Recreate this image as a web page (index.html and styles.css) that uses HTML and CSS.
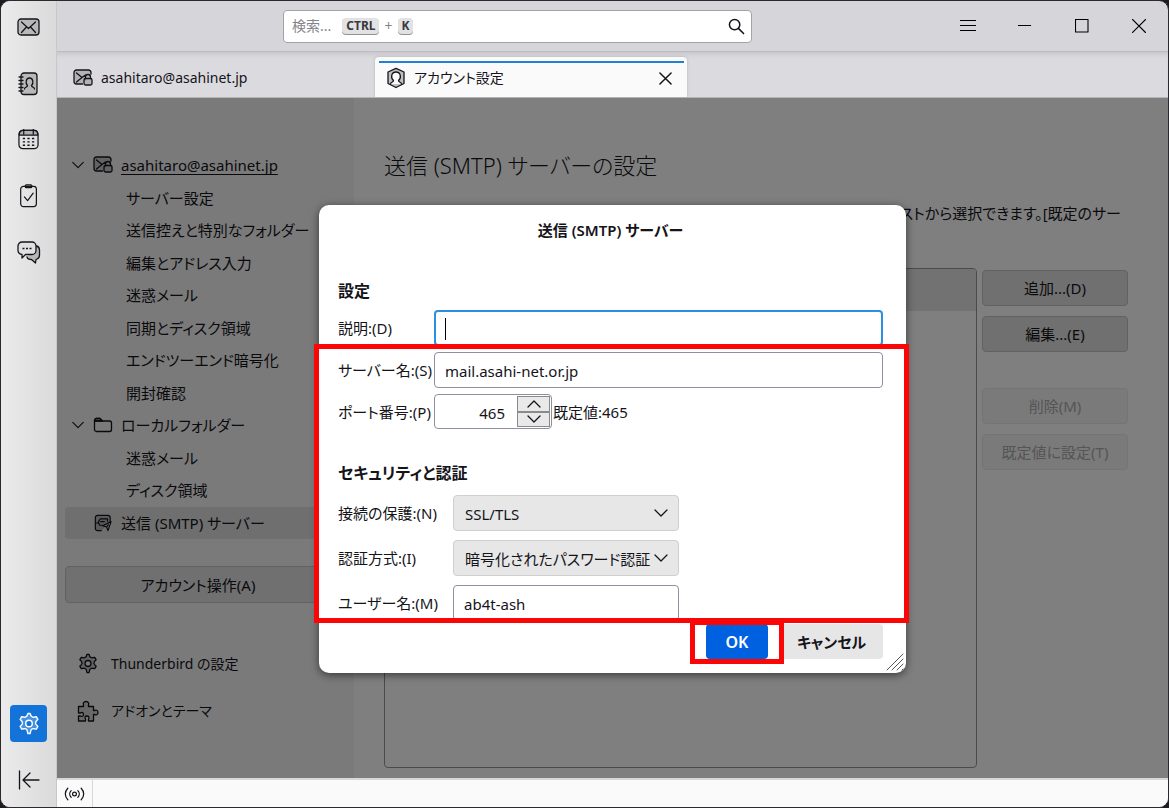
FILE: index.html
```html
<!DOCTYPE html>
<html lang="ja">
<head>
<meta charset="utf-8">
<title>アカウント設定</title>
<link rel="stylesheet" href="styles.css">
</head>
<body>
<svg class="defs" aria-hidden="true">
  <symbol id="i-server" viewBox="0 0 20 18"><path fill="currentColor" fill-opacity=".2" d="M9.500 15H3.500A2.500 2.500 0 0 1 1 12.500v-9A2.500 2.500 0 0 1 3.500 1h12A2.500 2.500 0 0 1 18 3.500V5M3.500 4l5.500 4.500L3.500 13M9 8.500 12.500 6M12.500 9.500V8a2.500 2.500 0 0 1 5 0v1.500"/><rect x="11" y="9.500" width="8" height="6.500" rx="1.500" fill="currentColor" fill-opacity=".2"/></symbol>
  <symbol id="i-gear" viewBox="0 0 22 22"><path fill="currentColor" fill-opacity=".22" d="M9.300 3.200 10 1.300h2l.7 1.900c.2.700.7 1 1.300 1.300.5.300 1 .3 1.500.2l2.200-.4 1.400 2.400-1.500 1.700c-.4.500-.6 1-.6 1.600s.2 1.100.6 1.600l1.500 1.700-1.400 2.400-2.200-.4c-.5-.1-1 0-1.500.2-.6.300-1.100.6-1.300 1.300l-.7 2.900h-2l-.7-2.900c-.2-.7-.7-1-1.300-1.300-.5-.2-1-.3-1.500-.2l-2.200.4-1.400-2.400 1.500-1.700c.4-.5.6-1 .6-1.600s-.2-1.100-.6-1.600L2.900 6.700l1.400-2.400 2.200.4c.5.1 1 .1 1.500-.2.600-.3 1.100-.6 1.300-1.300Z"/><circle cx="11" cy="10.500" r="3" fill="var(--hole)"/></symbol>
  <symbol id="i-down" viewBox="0 0 16 10"><path d="m2 2 6 6 6-6"/></symbol>
</svg>

<div class="window">
  <nav class="spaces" aria-label="スペース">
    <button class="space" aria-label="メール"><svg viewBox="0 0 24 20"><rect x="1" y="1" width="21" height="16" rx="3" fill="currentColor" fill-opacity=".2"/><path d="m4.500 4 7 6.500 7-6.500M4.500 14.500l4.500-5M18.500 14.500l-4.500-5"/></svg></button>
    <button class="space" aria-label="アドレス帳"><svg viewBox="0 0 22 24"><rect x="3" y="1" width="16" height="21.500" rx="3" fill="currentColor" fill-opacity=".2"/><path d="M1 5h4M1 8.500h4M1 12h4M1 15.500h4M1 19h4M6.500 17c0-2 2.500-1.500 3-3.500C7 11 8 6 11.500 6s4.500 5 2 7.500c.5 2 3 1.500 3 3.500"/></svg></button>
    <button class="space" aria-label="カレンダー"><svg class="cal" viewBox="0 0 22 22"><rect x="1" y="1.500" width="20" height="19" rx="4"/><path d="M1.500 6V5a3.500 3.500 0 0 1 3.500-3.500h12A3.500 3.500 0 0 1 20.500 5v1.500h-19" fill="currentColor" fill-opacity=".25"/><path d="M6 .5v5M16 .5v5"/><path stroke-width="1.500" stroke-linecap="butt" stroke-dasharray="2.400 2.400" d="M5 10h12M5 13.500h12M5 17h12"/></svg></button>
    <button class="space" aria-label="ToDo"><svg viewBox="0 0 20 26"><rect x="1" y="2.500" width="17" height="22" rx="3"/><rect x="6" y="1" width="7" height="3" rx="1" fill="currentColor" fill-opacity=".2"/><path d="m5 14 3.500 4 6-8"/></svg></button>
    <button class="space" aria-label="チャット"><svg viewBox="0 0 24 24"><path d="M19.500 6c2 .5 3 1.500 3 4v5c0 2.500-1 3.500-2.500 4l-1 .5-.5 3.500-4-3.500c-2.500 0-4-.5-4.500-2.500" fill="currentColor" fill-opacity=".2"/><path d="M5 2h10a4 4 0 0 1 4 4v4.500a4 4 0 0 1-4 4H8.500L5 18v-3.500a4 4 0 0 1-4-4V6a4 4 0 0 1 4-4Z" fill="#e0e0e0"/><path stroke-width="1.500" stroke-linecap="butt" d="M5.500 8.500h2M9 8.500h2M12.500 8.500h2"/></svg></button>
    <button class="space active" aria-label="設定"><svg viewBox="0 0 22 22"><use href="#i-gear"/></svg></button>
    <button class="space collapse" aria-label="スペースツールバーを隠す"><svg viewBox="0 0 22 20"><path d="M1.500 1v18M5 10h16M12 3l-7 7 7 7"/></svg></button>
  </nav>

  <div class="main">
    <header class="toolbar">
      <label class="search">
        <input type="search" aria-label="検索">
        <span class="hint">検索... <kbd>CTRL</kbd><small>+</small><kbd>K</kbd></span>
        <svg viewBox="0 0 18 18"><circle cx="7" cy="7" r="5.500"/><path d="m11 11 5.500 5.500"/></svg>
      </label>
      <div class="controls">
        <button aria-label="メニュー"><svg viewBox="0 0 16 16"><path d="M.5 2.500h15M.5 7.500h15M.5 12.500h15"/></svg></button>
        <button aria-label="最小化"><svg viewBox="0 0 14 14"><path d="M.5 6.500h12"/></svg></button>
        <button aria-label="最大化"><svg viewBox="0 0 14 14"><path d="M.5.500h12.500v12.500H.5z"/></svg></button>
        <button aria-label="閉じる"><svg viewBox="0 0 14 14"><path d="m.5.500 13 13M13.500.500l-13 13"/></svg></button>
      </div>
    </header>

    <div class="tabs" role="tablist">
      <div class="tab" role="tab"><svg class="icon" viewBox="0 0 20 18"><use href="#i-server"/></svg><span>asahitaro@asahinet.jp</span></div>
      <div class="tab selected" role="tab" aria-selected="true">
        <svg class="icon" viewBox="0 0 20 22"><path d="M10 1.300 18 5v11.500L10 20.500 2 16.500V5Z" fill="currentColor" fill-opacity=".25"/><path fill="#fafafa" d="M4.500 17c0-2 3-1.500 3-3.500-3-2.500-2.500-8.500 2.500-8.500s5.500 6 2.500 8.500c0 2 3 1.500 3 3.500"/></svg>
        <span>アカウント設定</span>
        <button class="close" aria-label="タブを閉じる"><svg viewBox="0 0 14 14"><path d="m1 1 12 12M13 1 1 13"/></svg></button>
      </div>
    </div>

    <div class="content">
      <aside class="sidebar">
        <ul class="tree">
          <li class="account"><svg class="twisty" viewBox="0 0 16 10"><use href="#i-down"/></svg><svg class="icon" viewBox="0 0 20 18"><use href="#i-server"/></svg><a class="underlined" href="#">asahitaro@asahinet.jp</a></li>
          <li><a href="#">サーバー設定</a></li>
          <li><a href="#">送信控えと特別なフォルダー</a></li>
          <li><a href="#">編集とアドレス入力</a></li>
          <li><a href="#">迷惑メール</a></li>
          <li><a href="#">同期とディスク領域</a></li>
          <li><a href="#">エンドツーエンド暗号化</a></li>
          <li><a href="#">開封確認</a></li>
          <li class="account"><svg class="twisty" viewBox="0 0 16 10"><use href="#i-down"/></svg><svg class="icon" viewBox="0 0 20 18"><path fill="currentColor" fill-opacity=".2" d="M1.500 5V4.500a2 2 0 0 1 2-2H7L9.500 5Z"/><path d="M1.500 5h8M3.500 2.500H7L9.500 5h7a2 2 0 0 1 2 2v6.500a2 2 0 0 1-2 2h-13a2 2 0 0 1-2-2v-9a2 2 0 0 1 2-2Z"/></svg><a href="#">ローカルフォルダー</a></li>
          <li><a href="#">迷惑メール</a></li>
          <li><a href="#">ディスク領域</a></li>
          <li class="account current"><span class="twisty"></span><svg class="icon" viewBox="0 0 20 20"><path fill="currentColor" fill-opacity=".2" d="M8 18.500H4A2.500 2.500 0 0 1 1.500 16V4A2.500 2.500 0 0 1 4 1.500h11.500A2.500 2.500 0 0 1 18 4v5M1.500 10h4L6 12.500h3"/><path d="M5 10V8.500l2-3h8V8M7.500 8.500h4M19 8.500l-3.500 10-1.500-4-4.500-1.500Zm-5 6 2-2.500"/></svg><a href="#">送信 (SMTP) サーバー</a></li>
        </ul>
        <button class="btn actions">アカウント操作(A)</button>
        <div class="links">
          <a href="#"><svg viewBox="0 0 22 22"><use href="#i-gear"/></svg>Thunderbird の設定</a>
          <a href="#"><svg viewBox="0 0 22 22"><path fill="currentColor" fill-opacity=".15" d="M1.500 6.500h5V4.700C6 4 6.200 1.500 9 1.500s3 2.500 2.500 3.200v1.800h5v4h1.300c1-.8 3.200-.5 3.200 2s-2.200 2.800-3.200 2h-1.300v6.500h-5V19c1-1.500.5-3-1.500-3s-2.500 1.500-1.500 3v2h-7v-5h2c1.500.8 3 .3 3-1.500s-1.500-2.500-3-1.500h-2Z"/></svg>アドオンとテーマ</a>
        </div>
      </aside>

      <main class="pane">
        <h1>送信 (SMTP) サーバーの設定</h1>
        <p>リストから選択できます。[既定のサー</p>
        <div class="columns">
          <div class="listbox"><div class="entry"></div></div>
          <div class="side">
            <button class="btn">追加...(D)</button>
            <button class="btn">編集...(E)</button>
            <button class="btn off" disabled>削除(M)</button>
            <button class="btn off" disabled>既定値に設定(T)</button>
          </div>
        </div>
      </main>

      <div class="scrim">
        <form class="dialog" role="dialog" aria-labelledby="dlg-title">
          <h2 id="dlg-title">送信 (SMTP) サーバー</h2>
          <div class="fields">
            <h3>設定</h3>
            <div class="grid">
              <label for="desc">説明:(D)</label>
              <div class="focus"><input id="desc" type="text"><i class="caret"></i></div>
              <label for="host">サーバー名:(S)</label>
              <input id="host" type="text" value="mail.asahi-net.or.jp">
              <label for="port">ポート番号:(P)</label>
              <div class="portrow">
                <div class="spin">
                  <input id="port" type="text" inputmode="numeric" value="465">
                  <div class="arrows">
                    <button type="button" aria-label="増やす"><svg viewBox="0 0 16 10"><path d="m2 8 6-6 6 6"/></svg></button>
                    <button type="button" aria-label="減らす"><svg viewBox="0 0 16 10"><use href="#i-down"/></svg></button>
                  </div>
                </div>
                <span>既定値:465</span>
              </div>
            </div>
            <h3 class="second">セキュリティと認証</h3>
            <div class="grid security">
              <label for="sec">接続の保護:(N)</label>
              <div class="select"><select id="sec"><option>SSL/TLS</option></select><svg viewBox="0 0 16 10"><use href="#i-down"/></svg></div>
              <label for="auth">認証方式:(I)</label>
              <div class="select"><select id="auth"><option>暗号化されたパスワード認証</option></select><svg viewBox="0 0 16 10"><use href="#i-down"/></svg></div>
              <label for="user">ユーザー名:(M)</label>
              <input id="user" type="text" value="ab4t-ash">
            </div>
          </div>
          <div class="buttons">
            <div class="ok-wrap"><button type="button" class="ok">OK</button><span class="mark mark-ok"></span></div>
            <button type="button" class="cancel">キャンセル</button>
          </div>
          <span class="mark mark-form"></span>
          <svg class="grip" viewBox="0 0 18 18"><path d="M1 17 17 1M6 17 17 6M11 17l6-6M16 17l1-1"/></svg>
        </form>
      </div>
    </div>

    <footer class="status">
      <button aria-label="オンライン"><svg viewBox="0 0 22 16"><circle cx="11" cy="8" r="2"/><path d="M7.500 4.500c-2 2-2 5 0 7M14.500 4.500c2 2 2 5 0 7M4 2C.5 5.500.5 10.500 4 14M18 2c3.500 3.500 3.500 8.500 0 12"/></svg></button>
    </footer>
  </div>
</div>
</body>
</html>
```
FILE: styles.css
```css
* { box-sizing: border-box; }

body {
  margin: 0;
  background: #1d1b20;
  color: #15141a;
  font: 15px/24px "Noto Sans", "Noto Sans CJK JP", sans-serif;
  font-feature-settings: "palt";
}

button, input, select {
  font: inherit;
  font-feature-settings: inherit;
  color: inherit;
  margin: 0;
}

button { padding: 0; border: 0; background: none; }
a { color: inherit; text-decoration: none; }
h1, h2, h3, p, ul { margin: 0; padding: 0; }

svg {
  fill: none;
  stroke: currentColor;
  stroke-width: 1.3;
  stroke-linecap: round;
  stroke-linejoin: round;
  flex: none;
}

.defs { position: absolute; width: 0; height: 0; }

.window {
  display: flex;
  min-height: 100vh;
  border: 1px solid #2b2930;
  border-radius: 10px;
  background: #d6d5da;
  overflow: hidden;
}

/* Spaces bar */
.spaces {
  display: flex;
  flex-direction: column;
  align-items: center;
  gap: 19px;
  flex: none;
  width: 56px;
  padding: 8px 0 9px;
  border-right: 1px solid #c8c8ca;
  background: linear-gradient(90deg, #ebebeb, #dadada);
}

.space {
  --hole: transparent;
  display: grid;
  place-items: center;
  width: 37px;
  height: 37px;
  border-radius: 4px;
}
.space svg { width: 24px; height: 24px; }
.space .cal { width: 21px; height: 21px; }
.space.active { margin-top: auto; background: #1373d9; color: #fff; --hole: #1373d9; }
.space.collapse svg { width: 22px; height: 20px; }

.main { display: flex; flex-direction: column; flex: 1; min-width: 0; }

/* Title toolbar */
.toolbar {
  display: flex;
  align-items: center;
  justify-content: space-between;
  height: 51px;
  padding: 0 1px 0 226px;
  border-bottom: 1px solid #bdbcc1;
}

.search {
  position: relative;
  display: flex;
  align-items: center;
  width: 53%;
  height: 33px;
}
.search input {
  width: 100%;
  height: 33px;
  border: 1px solid #a3a2a8;
  border-radius: 4px;
  background: #fff;
}
.hint {
  position: absolute;
  left: 9px;
  display: flex;
  align-items: center;
  color: #85848a;
  font-size: 14px;
}
.hint small { margin: 0 5px; font-size: 14px; }
kbd {
  padding: 0 4px;
  border-radius: 4px;
  background: #e2e2e4;
  box-shadow: 0 1px 0 #909095;
  color: #38383d;
  font: bold 12px/16px "Noto Sans", sans-serif;
}
.hint kbd:first-of-type { margin-left: 11px; }
.search svg { position: absolute; right: 7px; width: 17px; height: 17px; stroke-width: 1.6; }

.controls { display: flex; }
.controls button { display: grid; place-items: center; width: 57px; height: 50px; }
.controls svg { width: 14px; height: 14px; stroke-width: 1.1; color: #000; stroke-linecap: square; }
.controls button:first-child svg { width: 16px; height: 16px; }

/* Tabs */
.tabs {
  display: flex;
  align-items: flex-end;
  gap: 3px;
  height: 46px;
  padding-left: 3px;
  border-bottom: 1px solid #b5b4b9;
  background: #dbdadf;
  box-shadow: inset 0 5px 5px -3px #c4c3c8;
  font-size: 14px;
}
.tab {
  display: flex;
  align-items: center;
  gap: 8px;
  width: 312px;
  height: 40px;
  padding: 2px 12px 0 13px;
}
.tab .icon { width: 20px; height: 18px; }
.tab.selected {
  position: relative;
  padding-left: 11px;
  border-radius: 4px 4px 0 0;
  background: #fafafa;
  box-shadow: 0 0 3px #b0afb4;
}
.tab.selected::before {
  content: "";
  position: absolute;
  inset: 4px 3px auto 4px;
  height: 2px;
  background: #2080d4;
}
.tab.selected .icon { height: 22px; }
.close { display: grid; margin-left: auto; padding: 3px; }
.close svg { width: 13px; height: 13px; stroke-width: 1.6; }

/* Account settings page */
.content { position: relative; display: flex; flex: 1; background: #fff; }

.sidebar {
  flex: none;
  width: 297px;
  padding: 51px 8px 0;
  background: #f4f4f4;
}
.tree { display: flex; flex-direction: column; height: 390px; list-style: none; }
.tree li { display: flex; align-items: center; flex: 1; padding-left: 61px; white-space: nowrap; }
.tree .account { gap: 8px; padding-left: 6px; }
.tree .icon { width: 20px; height: 18px; }
.twisty { width: 14px; height: 10px; }
.underlined { text-decoration: underline; text-underline-offset: 3px; }
.tree .current { border-radius: 4px; background: #dedede; }

.btn {
  height: 36px;
  border: 1px solid #c4c4c6;
  border-radius: 4px;
  background: #e0e0e1;
}
.btn.off { border-color: #e8e8e8; background: #f5f5f5; color: #aaaaad; }
.actions { width: 100%; height: 37px; margin-top: 27px; padding-right: 15px; }

.links {
  --hole: #f4f4f4;
  display: flex;
  flex-direction: column;
  gap: 23px;
  padding: 49px 0 0 12px;
  font-size: 14px;
}
.links a { display: flex; align-items: center; gap: 12px; }
.links svg { width: 22px; height: 22px; }

.pane { display: flex; flex-direction: column; flex: 1; min-width: 0; padding: 51px 40px 10px 30px; }
.pane h1 { font-size: 22px; font-weight: 300; line-height: 32px; }
.pane p { margin-top: 20px; padding-right: 7px; text-align: right; white-space: nowrap; }
.columns { display: flex; flex: 1; gap: 5px; margin-top: 43px; }
.listbox { flex: 1; border: 1px solid #97979a; border-radius: 4px; overflow: hidden; }
.entry { height: 42px; background: #e4e4e4; }
.side { display: flex; flex-direction: column; gap: 10px; width: 146px; padding-top: 2px; }
.side .btn.off:nth-child(3) { margin-top: 26px; }

/* Modal dialog */
.scrim {
  position: absolute;
  inset: 0;
  display: grid;
  place-items: center;
  padding-top: 2px;
  background: rgb(0 0 0 / 50%);
}
.dialog {
  position: relative;
  width: 587px;
  max-width: 100%;
  padding: 13px 23px 14px 19px;
  border-radius: 10px;
  background: #fff;
  box-shadow: 0 2px 8px rgb(0 0 0 / 55%);
}
.dialog h2 { font-size: 15px; font-weight: 600; line-height: 24px; text-align: center; }
.fields { height: 378px; padding-top: 37px; overflow: hidden; }
.fields h3 { font-size: 16px; font-weight: 600; line-height: 24px; }
.fields h3.second { margin-top: 32px; }
.grid { display: grid; grid-template-columns: 96px 1fr; row-gap: 6px; align-items: center; margin-top: 7px; }
.grid label { white-space: nowrap; }
.grid input[type="text"] {
  width: 100%;
  height: 36px;
  padding: 2px 10px 0;
  border: 1px solid #8f8f9d;
  border-radius: 4px;
  background: #fff;
}
.focus { position: relative; }
.grid .focus input { border: 2px solid #2d8fe0; }
.caret { position: absolute; left: 11px; top: 8px; width: 1px; height: 22px; background: #000; }

.portrow { display: flex; align-items: center; gap: 1px; }
.spin {
  display: flex;
  width: 118px;
  height: 35px;
  padding: 1px;
  border: 1px solid #8f8f9d;
  border-radius: 4px;
}
.grid .spin input { flex: 1; min-width: 0; height: 31px; padding-right: 12px; border: 0; text-align: right; }
.arrows { display: grid; width: 33px; }
.arrows button { display: grid; place-items: center; border: 1px solid #8a8a8a; background: #e9e9e9; }
.arrows svg { width: 16px; height: 10px; }

.security { grid-template-columns: 115px 226px; row-gap: 9px; margin-top: 10px; }
.select { position: relative; }
.select select {
  appearance: none;
  width: 100%;
  height: 36px;
  padding: 2px 11px 0;
  border: 1px solid #cfcfd1;
  border-radius: 4px;
  background: #e7e7e7;
}
.select svg { position: absolute; right: 10px; top: 13px; width: 16px; height: 10px; pointer-events: none; }

.buttons { display: flex; justify-content: flex-end; gap: 12px; padding-top: 4px; font-weight: 600; }
.ok-wrap { position: relative; display: flex; }
.ok { width: 62px; height: 35px; border-radius: 4px; background: #0061e0; color: #fff; font-size: 16px; }
.cancel { width: 103px; height: 35px; border-radius: 4px; background: #e6e6e6; }

.mark { position: absolute; border: 5px solid #fb0606; pointer-events: none; }
.mark-form { inset: 139px -3px 50px -5px; }
.mark-ok { inset: -4px -16px -5px; }
.grip { position: absolute; right: 2px; bottom: 2px; width: 18px; height: 18px; stroke-width: 1; color: #555; }

/* Status bar */
.status { display: flex; height: 29px; border-top: 2px solid #d8d8da; background: #fafafa; }
.status button { display: grid; place-items: center; width: 36px; border-right: 1px solid #d8d8da; }
.status svg { width: 21px; height: 16px; }
```
